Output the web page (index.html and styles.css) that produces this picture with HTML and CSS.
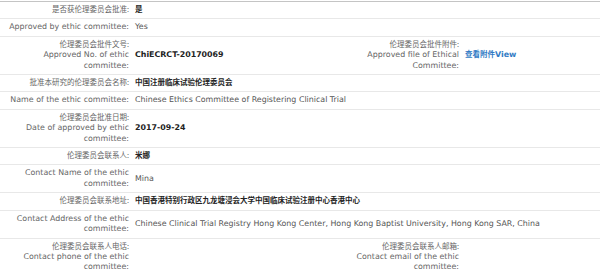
FILE: index.html
```html
<!DOCTYPE html>
<html lang="zh">
<head>
<meta charset="utf-8">
<title>伦理委员会</title>
<link rel="stylesheet" href="styles.css">
</head>
<body>
<table class="info">
  <colgroup>
    <col class="c-label"><col class="c-value"><col class="c-label"><col class="c-value2">
  </colgroup>
  <tbody>
    <tr class="cn">
      <td class="lbl"><span class="zh">是否获伦理委员会批准:</span></td>
      <td class="val" colspan="3"><span class="zh">是</span></td>
    </tr>
    <tr class="en">
      <td class="lbl">Approved by ethic committee:</td>
      <td class="val" colspan="3">Yes</td>
    </tr>
    <tr class="both">
      <td class="lbl"><span class="zh">伦理委员会批件文号:</span><br>Approved No. of ethic committee:</td>
      <td class="val">ChiECRCT-20170069</td>
      <td class="lbl"><span class="zh">伦理委员会批件附件:</span><br>Approved file of Ethical Committee:</td>
      <td class="val"><a class="link" href="#"><span class="zh">查看附件</span>View</a></td>
    </tr>
    <tr class="cn">
      <td class="lbl"><span class="zh">批准本研究的伦理委员会名称:</span></td>
      <td class="val" colspan="3"><span class="zh">中国注册临床试验伦理委员会</span></td>
    </tr>
    <tr class="en">
      <td class="lbl">Name of the ethic committee:</td>
      <td class="val" colspan="3">Chinese Ethics Committee of Registering Clinical Trial</td>
    </tr>
    <tr class="both">
      <td class="lbl"><span class="zh">伦理委员会批准日期:</span><br>Date of approved by ethic committee:</td>
      <td class="val" colspan="3">2017-09-24</td>
    </tr>
    <tr class="cn">
      <td class="lbl"><span class="zh">伦理委员会联系人:</span></td>
      <td class="val" colspan="3"><span class="zh">米娜</span></td>
    </tr>
    <tr class="en">
      <td class="lbl">Contact Name of the ethic committee:</td>
      <td class="val" colspan="3">Mina</td>
    </tr>
    <tr class="cn">
      <td class="lbl"><span class="zh">伦理委员会联系地址:</span></td>
      <td class="val" colspan="3"><span class="zh">中国香港特别行政区九龙塘浸会大学中国临床试验注册中心香港中心</span></td>
    </tr>
    <tr class="en">
      <td class="lbl">Contact Address of the ethic committee:</td>
      <td class="val" colspan="3">Chinese Clinical Trial Registry Hong Kong Center, Hong Kong Baptist University, Hong Kong SAR, China</td>
    </tr>
    <tr class="both">
      <td class="lbl"><span class="zh">伦理委员会联系人电话:</span><br>Contact phone of the ethic committee:</td>
      <td class="val"></td>
      <td class="lbl"><span class="zh">伦理委员会联系人邮箱:</span><br>Contact email of the ethic committee:</td>
      <td class="val"></td>
    </tr>
  </tbody>
</table>
</body>
</html>
```
FILE: styles.css
```css
html, body {
  margin: 0;
  padding: 0;
  background: #ffffff;
}
body {
  padding-top: 1px;
  font-family: "DejaVu Sans", Verdana, "Noto Sans CJK SC", sans-serif;
  font-size: 7.9px;
  line-height: 10.4px;
  color: #555555;
}
.zh {
  font-family: "Noto Sans CJK SC", sans-serif;
  font-size: 7.5px;
  line-height: 1;
}
.info {
  width: 600px;
  border-collapse: collapse;
  table-layout: fixed;
  border-top: 1px solid #c4c4c4;
}
.c-label { width: 132px; }
.c-value { width: 198px; }
.c-value2 { width: 138px; }
.info td {
  padding: 3px 3px;
  border-bottom: 1px solid #e8e8e8;
  vertical-align: middle;
}
.lbl {
  text-align: right;
  color: #666666;
}
.val {
  text-align: left;
  padding-left: 4px;
}
.cn .val, .both .val {
  color: #222222;
}
.cn .val .zh {
  font-weight: bold;
}
.both .val {
  font-weight: bold;
}
.en .val {
  color: #555555;
}
.link {
  color: #2f7ac4;
  text-decoration: none;
  font-weight: bold;
}
```
